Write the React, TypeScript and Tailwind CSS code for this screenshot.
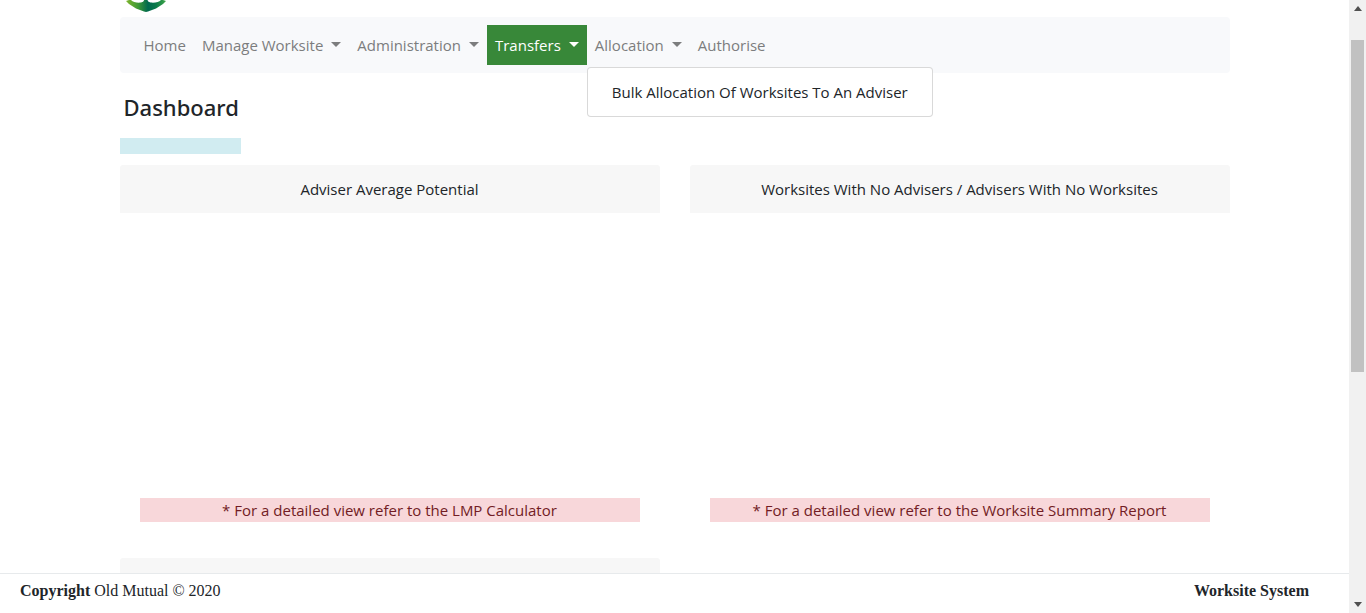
import React from 'react';

type NavItem = { label: string; menu?: string[]; active?: boolean; open?: boolean };

const navItems: NavItem[] = [
  { label: 'Home' },
  { label: 'Manage Worksite', menu: [] },
  { label: 'Administration', menu: [] },
  { label: 'Transfers', menu: [], active: true },
  { label: 'Allocation', menu: ['Bulk Allocation Of Worksites To An Adviser'], open: true },
  { label: 'Authorise' },
];

function Logo() {
  return (
    <svg width="42" height="12" viewBox="0 0 42 12" aria-label="Old Mutual" role="img">
      <defs>
        <linearGradient id="leaf" x1="0" y1="0" x2="1" y2="0">
          <stop offset="0" stopColor="#7fb52c" />
          <stop offset="0.3" stopColor="#3f9a36" />
          <stop offset="0.55" stopColor="#00694e" />
          <stop offset="0.75" stopColor="#0b7a4a" />
          <stop offset="1" stopColor="#3fa648" />
        </linearGradient>
      </defs>
      <path
        d="M1 1 L4 0 H6 C8 2 12 3.2 16 2.6 Q18.6 2 19.2 0 H22.4 Q23 2 25.6 2.6 C30 3.2 34 2 36 0 H38 L41 1 L38 4 L31 8.6 L23 11.6 Q21 12.3 19 11.6 L11 8.6 L4 4 Z"
        fill="url(#leaf)"
      />
    </svg>
  );
}

function Caret() {
  return (
    <svg width="10" height="5" viewBox="0 0 10 5" className="mb-0.5" aria-hidden="true">
      <path d="M0 0H10L5 5Z" fill="currentColor" />
    </svg>
  );
}

function NavEntry({ item }: { item: NavItem }) {
  const look = item.active ? 'bg-[#388839] text-white' : 'text-[#7c7d7e]';
  return (
    <li className="relative">
      {item.menu ? (
        <button
          type="button"
          aria-haspopup="menu"
          aria-expanded={!!item.open}
          className={`flex h-10 items-center gap-2 px-2 whitespace-nowrap ${look}`}
        >
          {item.label}
          <Caret />
        </button>
      ) : (
        <a href="#" className={`flex h-10 items-center px-2 whitespace-nowrap ${look}`}>
          {item.label}
        </a>
      )}
      {item.open && (
        <ul className="absolute top-full left-0 z-10 mt-0.5 rounded border border-black/15 bg-white py-3">
          {item.menu?.map((entry) => (
            <li key={entry}>
              <a href="#" className="block px-6 whitespace-nowrap text-[#212529]">
                {entry}
              </a>
            </li>
          ))}
        </ul>
      )}
    </li>
  );
}

function Card({ title, note }: { title?: string; note?: string }) {
  return (
    <section>
      <h2 className="h-12 rounded-t-[3px] bg-[#f7f7f7] py-3 text-center">{title}</h2>
      <div className="px-5 pt-[285px] pb-9">
        {note && <p className="bg-[#f8d7da] text-center text-[#721c24]">{note}</p>}
      </div>
    </section>
  );
}

function ScrollBar() {
  return (
    <div className="flex w-[17px] shrink-0 flex-col items-center bg-[#f1f1f1] py-1.5 text-[#505050]" aria-hidden="true">
      <svg width="8" height="5" viewBox="0 0 8 5" className="shrink-0">
        <path d="M4 0L8 5H0Z" fill="currentColor" />
      </svg>
      <div className="flex w-full flex-1 flex-col px-0.5">
        <div className="grow-[29]" />
        <div className="grow-[332] bg-[#c1c1c1]" />
        <div className="grow-[230]" />
      </div>
      <svg width="8" height="5" viewBox="0 0 8 5" className="shrink-0">
        <path d="M0 0H8L4 5Z" fill="currentColor" />
      </svg>
    </div>
  );
}

export default function App() {
  return (
    <div className="flex h-screen bg-white font-['Open_Sans','Noto_Sans',sans-serif] text-[15px] leading-6 text-[#212529]">
      <div className="flex min-w-0 flex-1 flex-col">
        <div className="min-h-0 flex-1 overflow-hidden">
          <div className="mx-auto max-w-[1140px] px-[15px]">
            <header className="h-[17px] px-[5px]">
              <Logo />
            </header>
            <nav className="rounded bg-[#f8f9fb] px-4 py-2">
              <ul className="flex">
                {navItems.map((item) => (
                  <NavEntry key={item.label} item={item} />
                ))}
              </ul>
            </nav>
            <main>
              <h1 className="px-1 pt-5 pb-4 font-['Noto_Sans','Open_Sans',sans-serif] text-[22px] leading-[29px] font-medium">
                Dashboard
              </h1>
              <div className="h-4 w-[121px] bg-[#d1ecf1]" />
              <div className="mt-[11px] grid grid-cols-2 gap-x-[30px]">
                <Card title="Adviser Average Potential" note="* For a detailed view refer to the LMP Calculator" />
                <Card
                  title="Worksites With No Advisers / Advisers With No Worksites"
                  note="* For a detailed view refer to the Worksite Summary Report"
                />
                <Card />
              </div>
            </main>
          </div>
        </div>
        <footer className="flex h-10 shrink-0 justify-between border-t border-[#e7eaec] pt-[5px] pr-10 pl-5 font-['Liberation_Serif',serif] text-base leading-6">
          <p>
            <strong>Copyright</strong> Old Mutual © 2020
          </p>
          <strong>Worksite System</strong>
        </footer>
      </div>
      <ScrollBar />
    </div>
  );
}
